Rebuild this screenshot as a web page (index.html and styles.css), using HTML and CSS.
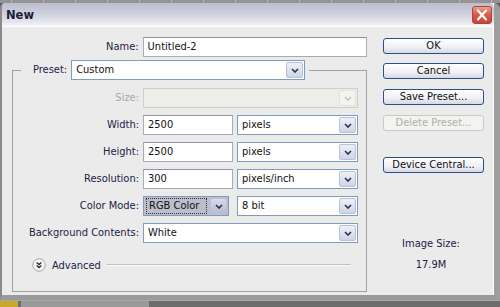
FILE: index.html
```html
<!DOCTYPE html>
<html>
	<head>
		<meta charset="UTF-8">
		<title>New</title>
		<link rel="stylesheet" href="styles.css">
	</head>
	<body>
		<div class="ruler"></div>
		<div class="window">
			<div class="titlebar">
				<span class="title">New</span>
				<span class="close">
					<svg width="20" height="18" viewBox="0 0 20 18">
						<path d="M6 4.5 L14 13.5 M14 4.5 L6 13.5" stroke="#fff" stroke-width="2.2" stroke-linecap="round"/>
					</svg>
				</span>
			</div>
			<div class="content">
				<div class="main">
					<div class="name-row">
						<span class="lbl name-lbl">Name:</span>
						<div class="field w-name">Untitled-2</div>
					</div>
					<fieldset class="group">
						<legend class="preset">
							<span class="lbl">Preset:</span>
							<div class="select w-preset">
								<span class="val">Custom</span>
								<span class="arrow"><svg width="8" height="5" viewBox="0 0 8 5"><path d="M1 1 L4 4 L7 1" fill="none" stroke="#26304f" stroke-width="1.6"/></svg></span>
							</div>
						</legend>
						<div class="grid">
							<span class="lbl off">Size:</span>
							<div class="select off">
								<span class="val"></span>
								<span class="arrow"><svg width="8" height="5" viewBox="0 0 8 5"><path d="M1 1 L4 4 L7 1" fill="none" stroke="#c4c4c4" stroke-width="1.6"/></svg></span>
							</div>

							<span class="lbl">Width:</span>
							<div class="pair">
								<div class="field w-num">2500</div>
								<div class="select w-unit">
									<span class="val">pixels</span>
									<span class="arrow"><svg width="8" height="5" viewBox="0 0 8 5"><path d="M1 1 L4 4 L7 1" fill="none" stroke="#26304f" stroke-width="1.6"/></svg></span>
								</div>
							</div>

							<span class="lbl">Height:</span>
							<div class="pair">
								<div class="field w-num">2500</div>
								<div class="select w-unit">
									<span class="val">pixels</span>
									<span class="arrow"><svg width="8" height="5" viewBox="0 0 8 5"><path d="M1 1 L4 4 L7 1" fill="none" stroke="#26304f" stroke-width="1.6"/></svg></span>
								</div>
							</div>

							<span class="lbl">Resolution:</span>
							<div class="pair">
								<div class="field w-num">300</div>
								<div class="select w-unit">
									<span class="val">pixels/inch</span>
									<span class="arrow"><svg width="8" height="5" viewBox="0 0 8 5"><path d="M1 1 L4 4 L7 1" fill="none" stroke="#26304f" stroke-width="1.6"/></svg></span>
								</div>
							</div>

							<span class="lbl">Color Mode:</span>
							<div class="pair wide-gap">
								<div class="select w-mode focus">
									<span class="val"><span class="dots">RGB Color</span></span>
									<span class="arrow"><svg width="8" height="5" viewBox="0 0 8 5"><path d="M1 1 L4 4 L7 1" fill="none" stroke="#26304f" stroke-width="1.6"/></svg></span>
								</div>
								<div class="select w-unit">
									<span class="val">8 bit</span>
									<span class="arrow"><svg width="8" height="5" viewBox="0 0 8 5"><path d="M1 1 L4 4 L7 1" fill="none" stroke="#26304f" stroke-width="1.6"/></svg></span>
								</div>
							</div>

							<span class="lbl">Background Contents:</span>
							<div class="select">
								<span class="val">White</span>
								<span class="arrow"><svg width="8" height="5" viewBox="0 0 8 5"><path d="M1 1 L4 4 L7 1" fill="none" stroke="#26304f" stroke-width="1.6"/></svg></span>
							</div>
						</div>
						<div class="advanced">
							<span class="adv-icon">
								<svg width="14" height="14" viewBox="0 0 14 14">
									<circle cx="7" cy="7" r="6.2" fill="#f6f6f6" stroke="#a4a4a4"/>
									<path d="M4.6 4.6 L7 6.6 L9.4 4.6 M4.6 7.6 L7 9.6 L9.4 7.6" fill="none" stroke="#2a2a3a" stroke-width="1.3"/>
								</svg>
							</span>
							<span class="adv-text">Advanced</span>
							<span class="adv-line"></span>
						</div>
					</fieldset>
				</div>
				<div class="side">
					<div class="btn">OK</div>
					<div class="btn">Cancel</div>
					<div class="btn">Save Preset...</div>
					<div class="btn off">Delete Preset...</div>
					<div class="btn device">Device Central...</div>
					<div class="img-size">Image Size:</div>
					<div class="img-value">17.9M</div>
				</div>
			</div>
		</div>
		<div class="taskbar">
			<span class="tray"></span>
			<span class="task"></span>
		</div>
	</body>
</html>
```

FILE: styles.css
```css
* {
	margin: 0;
	padding: 0;
	box-sizing: border-box;
}

body {
	width: 500px;
	height: 307px;
	overflow: hidden;
	background: #5c5c5c;
	font-family: "DejaVu Sans Condensed", "DejaVu Sans", sans-serif;
	font-size: 11px;
	color: #1b2246;
}

.ruler {
	height: 3px;
	background: repeating-linear-gradient(90deg, #949494 0, #949494 11px, #b4b4b4 11px, #b4b4b4 12px, #949494 12px, #949494 32px);
}

.window {
	height: 297px;
	background: #ebebeb;
	border-left: 2px solid #8a8a8a;
	border-right: 6px solid #9e9e9e;
	border-bottom: 5px solid #9a9a9a;
	border-radius: 5px 6px 0 0;
	box-shadow: inset -1px 0 0 #ffffff;
	display: flex;
	flex-direction: column;
}

.titlebar {
	height: 24px;
	display: flex;
	align-items: center;
	justify-content: space-between;
	padding: 0 2px 0 4px;
	border-radius: 4px 5px 0 0;
	background: linear-gradient(#bdbdcf, #cfcfdc 45%, #e4e4ec 80%, #f6f6f9);
	border-bottom: 1px solid #ffffff;
}

.title {
	font-family: "DejaVu Sans", sans-serif;
	font-weight: bold;
	font-size: 11.5px;
	color: #1b1e3a;
	padding-top: 1px;
}

.close {
	width: 20px;
	height: 18px;
	display: flex;
	border-radius: 3px;
	border: 1px solid #a8463c;
	background: linear-gradient(#eda08f, #d9574a 50%, #c8463a);
	margin-top: 1px;
}

.close svg {
	margin: -1px;
}

.content {
	flex: 1;
	display: flex;
	padding-top: 10px;
}

.main {
	width: 365px;
}

.lbl {
	text-align: right;
	line-height: 20px;
	white-space: nowrap;
}

.lbl.off {
	color: #a7a7b0;
}

.name-row {
	display: flex;
	gap: 4px;
}

.name-lbl {
	width: 137px;
}

.field {
	height: 20px;
	background: #ffffff;
	border: 1px solid #a6abb6;
	border-top-color: #8e94a2;
	color: #111;
	padding: 0 4px;
	line-height: 18px;
}

.w-name {
	width: 225px;
}

.w-num {
	width: 90px;
}

.group {
	margin: 3px 0 0 10px;
	width: 355px;
	border: 1px solid #a2a2a2;
	padding: 8px 0 18px 8px;
}

.preset {
	display: flex;
	align-items: center;
	gap: 4px;
	padding: 0 4px 0 12px;
}

.select {
	height: 20px;
	display: flex;
	background: #ffffff;
	border: 1px solid #7f9db9;
	color: #111;
}

.select .val {
	flex: 1;
	padding: 0 4px;
	line-height: 18px;
	white-space: nowrap;
	overflow: hidden;
}

.select .arrow {
	width: 17px;
	margin: 1px;
	display: flex;
	align-items: center;
	justify-content: center;
	border: 1px solid #b7c1da;
	border-radius: 2px;
	background: linear-gradient(#eef0f8, #cfd5e6);
}

.select.off {
	background: #eeeee8;
	border-color: #cfcfc6;
}

.select.off .arrow {
	background: #f3f3ef;
	border-color: #e2e2dc;
}

.select.focus {
	background: #bdbdcb;
}

.select.focus .val {
	padding: 1px 2px;
}

.select.focus .dots {
	display: block;
	height: 16px;
	line-height: 14px;
	padding: 0 2px;
	border: 1px dotted #333;
}

.select.focus .arrow {
	background: linear-gradient(#d8dbe8, #b6bccf);
}

.w-preset {
	width: 234px;
}

.w-unit {
	width: 121px;
}

.w-mode {
	width: 86px;
}

.grid {
	display: grid;
	grid-template-columns: 118px 215px;
	grid-auto-rows: 20px;
	column-gap: 4px;
	row-gap: 7px;
}

.pair {
	display: flex;
	gap: 4px;
}

.pair.wide-gap {
	gap: 8px;
}

.advanced {
	display: flex;
	align-items: center;
	height: 16px;
	margin-top: 14px;
	padding-left: 11px;
}

.adv-icon {
	display: flex;
	width: 14px;
	height: 14px;
}

.adv-text {
	margin-left: 6px;
}

.adv-line {
	width: 244px;
	height: 2px;
	margin-left: 6px;
	border-top: 1px solid #c2c2c2;
	border-bottom: 1px solid #fafafa;
}

.side {
	width: 101px;
	margin-left: 16px;
	padding-top: 1px;
	display: flex;
	flex-direction: column;
	gap: 10px;
}

.btn {
	height: 16px;
	border: 1px solid #2d4f86;
	border-radius: 3px;
	background: linear-gradient(#ffffff, #f1f1f6 55%, #d8d8e6);
	text-align: center;
	line-height: 14px;
	color: #111;
}

.btn:nth-child(2) {
	margin-top: -1px;
}

.btn.off {
	border-color: #cbc9c0;
	background: #f3f3ef;
	color: #aeaeb4;
}

.btn.device {
	margin-top: 16px;
}

.img-size,
.img-value {
	text-align: center;
	padding-right: 5px;
	line-height: 14px;
}

.img-size {
	margin-top: 54px;
}

.img-value {
	margin-top: -3px;
}

.taskbar {
	height: 7px;
	display: flex;
	background: #6c6c6c;
	border-top: 1px solid #a8a8a8;
}

.tray {
	width: 18px;
	background: #c9a92a;
}

.task {
	width: 128px;
	margin-left: 3px;
	background: #9a9a9a;
}
```
